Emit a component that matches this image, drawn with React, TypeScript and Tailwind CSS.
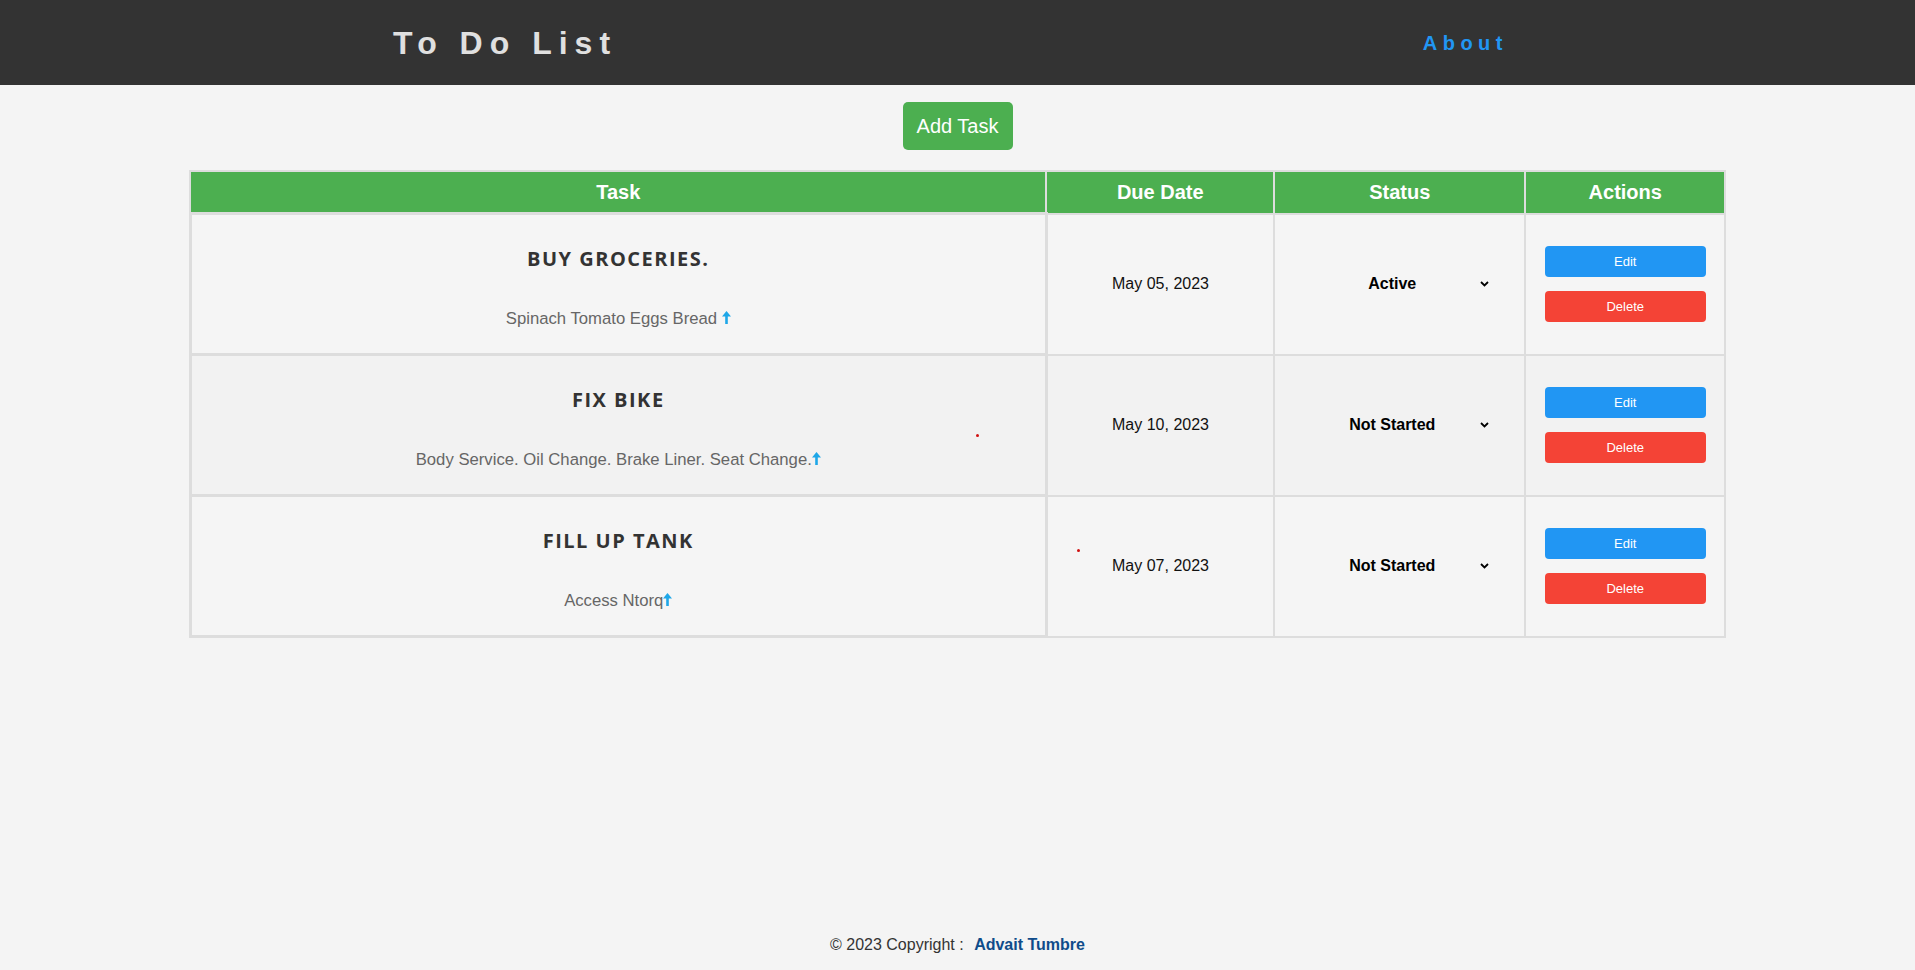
import React from "react";

const tasks = [
  { title: "Buy Groceries.", desc: "Spinach Tomato Eggs Bread", space: true, date: "May 05, 2023", status: "Active" },
  { title: "Fix Bike", desc: "Body Service. Oil Change. Brake Liner. Seat Change.", space: false, date: "May 10, 2023", status: "Not Started" },
  { title: "Fill up tank", desc: "Access Ntorq", space: false, date: "May 07, 2023", status: "Not Started" },
];

function UpArrow() {
  return (
    <svg width="9" height="13" viewBox="0 0 9 13" className="inline-block align-baseline" aria-hidden>
      <path d="M4.5 0 L9 5.5 L5.8 5.5 L5.8 13 L3.2 13 L3.2 5.5 L0 5.5 Z" fill="#1ea7e8" />
    </svg>
  );
}

function Chevron() {
  return (
    <svg width="9" height="6" viewBox="0 0 9 6" aria-hidden>
      <path d="M1 1 L4.5 4.5 L8 1" fill="none" stroke="#000" strokeWidth="1.8" />
    </svg>
  );
}

export default function App() {
  return (
    <div
      className="relative min-h-screen flex flex-col bg-[#f4f4f4]"
      style={{ fontFamily: '"Liberation Sans", Arial, sans-serif' }}
    >
      <header className="h-[85px] bg-[#333333] flex items-center justify-between pl-[393px] pr-[407px]">
        <h1 className="text-[32px] font-bold text-[#e0e0e0] tracking-[7px] leading-none">To Do List</h1>
        <a className="text-[20px] font-bold text-[#2196f3] tracking-[5.5px] leading-none">About</a>
      </header>

      <main className="flex flex-col items-center">
        <button className="mt-[17px] h-[48px] w-[110px] rounded-[5px] bg-[#4caf50] text-white text-[20px] leading-none">
          Add Task
        </button>

        <table className="mt-[20px] w-[1535px] table-fixed border-collapse border-2 border-[#dddddd]">
          <thead>
            <tr>
              <th className="w-[856px] bg-[#4caf50] border-2 border-[#dddddd] text-white text-[20px] font-bold leading-[24px] py-[8px]">Task</th>
              <th className="w-[228px] bg-[#4caf50] border-2 border-[#dddddd] text-white text-[20px] font-bold leading-[24px] py-[8px]">Due Date</th>
              <th className="w-[251px] bg-[#4caf50] border-2 border-[#dddddd] text-white text-[20px] font-bold leading-[24px] py-[8px]">Status</th>
              <th className="w-[200px] bg-[#4caf50] border-2 border-[#dddddd] text-white text-[20px] font-bold leading-[24px] py-[8px]">Actions</th>
            </tr>
          </thead>
          <tbody>
            {tasks.map((t, i) => (
              <tr key={i} className={i % 2 === 1 ? "bg-[#f2f2f2]" : "bg-[#f5f5f5]"}>
                <td className="h-[141px] border-[3px] border-[#dddddd] pt-[5px] pb-0 px-0 align-middle">
                  <div className="flex flex-col items-center">
                    <div
                      className="text-[20px] font-bold uppercase tracking-[1.5px] text-[#333333] leading-[27px]"
                      style={{ fontFamily: '"Open Sans", sans-serif' }}
                    >
                      {t.title}
                    </div>
                    <div className="mt-[38px] text-[16.7px] leading-[18px] text-[#666666]">
                      {t.desc}
                      {t.space ? " " : ""}
                      <UpArrow />
                    </div>
                  </div>
                </td>
                <td className="border-2 border-[#dddddd] text-center text-[16px] text-[#111111] align-middle">{t.date}</td>
                <td className="border-2 border-[#dddddd] align-middle">
                  <div className="mx-auto w-[190px] flex items-center">
                    <span className="flex-1 text-center text-[16px] font-bold text-black">{t.status}</span>
                    <span className="pr-[6px] flex items-center">
                      <Chevron />
                    </span>
                  </div>
                </td>
                <td className="border-2 border-[#dddddd] align-middle">
                  <div className="flex flex-col items-center gap-[14px]">
                    <button className="w-[161px] h-[31px] rounded-[4px] bg-[#2196f3] text-white text-[13px]">Edit</button>
                    <button className="w-[161px] h-[31px] rounded-[4px] bg-[#f44336] text-white text-[13px]">Delete</button>
                  </div>
                </td>
              </tr>
            ))}
          </tbody>
        </table>
      </main>

      <footer className="mt-auto pb-[16px] text-center text-[16px] leading-[18px] text-[#333333]">
        © 2023 Copyright :{" "}
        <a className="ml-[6px] font-bold text-[#0f4c8a]">Advait Tumbre</a>
      </footer>

      <span className="absolute left-[976px] top-[434px] w-[3px] h-[3px] rounded-full bg-[#d01010]" />
      <span className="absolute left-[1077px] top-[549px] w-[3px] h-[3px] rounded-full bg-[#d01010]" />
    </div>
  );
}
